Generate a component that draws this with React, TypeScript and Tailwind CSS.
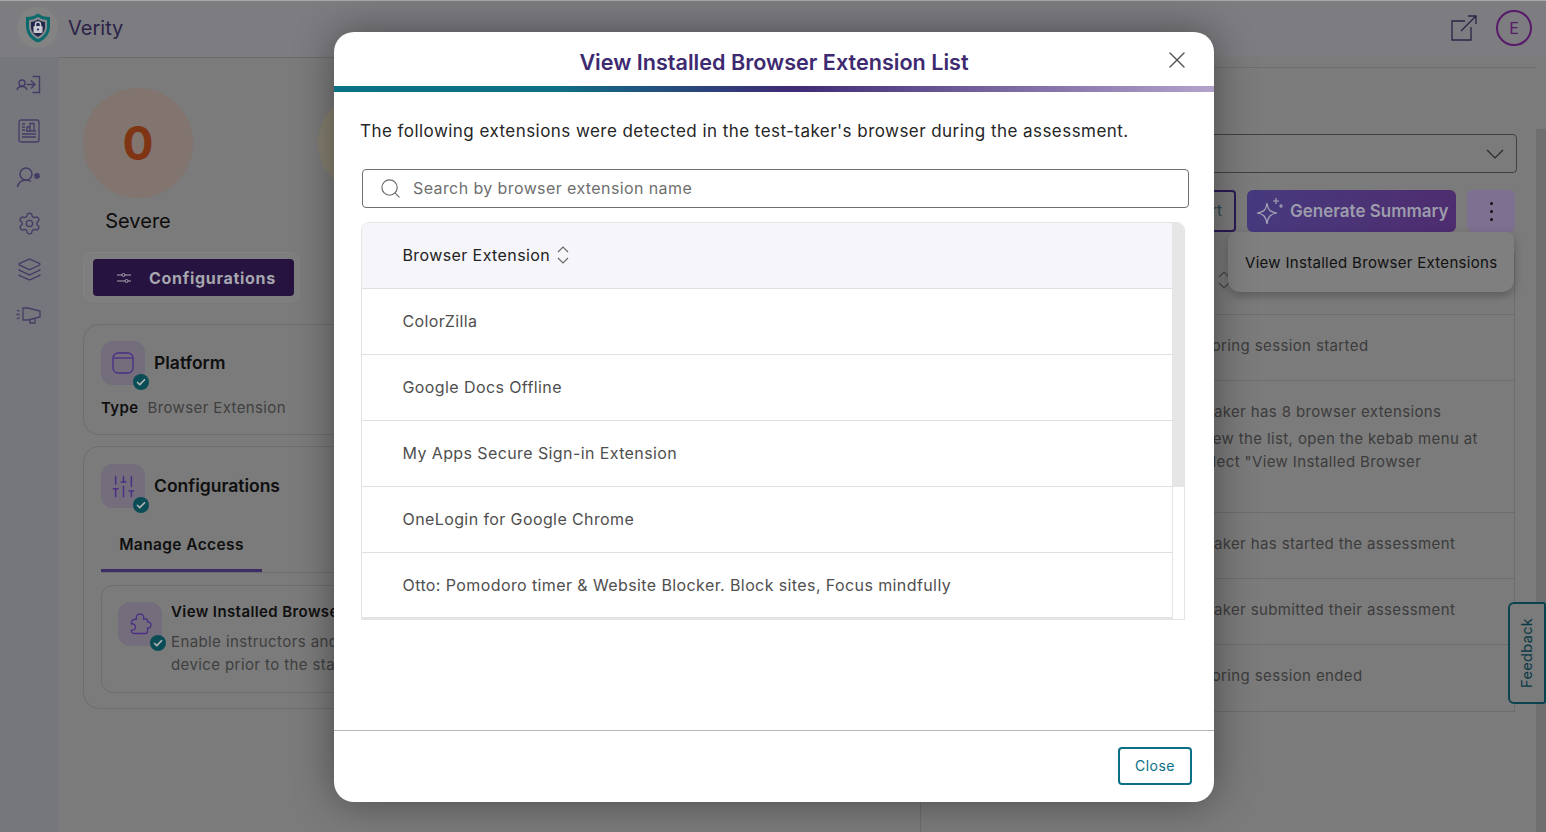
import { Layers, Search, Settings, SlidersVertical, X } from "lucide-react";

const inter = "font-['Inter','Noto_Sans',sans-serif]";

const extensions = [
  "ColorZilla",
  "Google Docs Offline",
  "My Apps Secure Sign-in Extension",
  "OneLogin for Google Chrome",
  "Otto: Pomodoro timer & Website Blocker. Block sites, Focus mindfully",
];

function Logo() {
  return (
    <svg width="28" height="32" viewBox="0 0 28 32" fill="none">
      <path d="M14 1.5 C17 4 21 5 26 5 V14 C26 22 21 28 14 30.5 C7 28 2 22 2 14 V5 C7 5 11 4 14 1.5Z" fill="#0b6a6c" />
      <path d="M14 5 C17 7 20 8 23 8 V14.5 C23 20.5 19 25 14 27 C9 25 5 20.5 5 14.5 V8 C8 8 11 7 14 5Z" fill="#8a8a8f" />
      <path d="M14 7.5 C16.5 9 18.5 9.7 21 10 V14.5 C21 19.5 18 23 14 24.7 C10 23 7 19.5 7 14.5 V10 C9.5 9.7 11.5 9 14 7.5Z" fill="#23284a" />
      <rect x="9.5" y="14" width="9" height="7" rx="1.2" fill="#c9c9d2" />
      <path d="M11.5 14 V12.5 a2.5 2.5 0 0 1 5 0 V14" stroke="#c9c9d2" strokeWidth="1.4" />
      <circle cx="14" cy="17.5" r="1.1" fill="#23284a" />
    </svg>
  );
}

function SortIcon({ color }: { color: string }) {
  return (
    <svg width="14" height="20" viewBox="0 0 14 20" fill="none" stroke={color} strokeWidth="1.2">
      <path d="M2 7 L7 2 L12 7" />
      <path d="M2 13 L7 18 L12 13" />
    </svg>
  );
}

function SideIcon({ name }: { name: string }) {
  const stroke = "#453c66";
  if (name === "login") {
    return (
      <svg width="26" height="22" viewBox="0 0 26 22" fill="none" stroke={stroke} strokeWidth="1.4">
        <circle cx="6" cy="9" r="3" />
        <path d="M1 16 C1.5 13.5 3.5 12.5 6 12.5 C8.5 12.5 10.5 13.5 11 16" />
        <path d="M10.5 10.5 H19 M15 6.5 L19 10.5 L15 14.5" />
        <path d="M16.5 2.5 H23.5 V18.5 H16.5" />
      </svg>
    );
  }
  if (name === "report") {
    return (
      <svg width="22" height="24" viewBox="0 0 22 24" fill="none" stroke={stroke} strokeWidth="1.3">
        <rect x="1" y="1" width="20" height="22" rx="2" />
        <path d="M4 5 H7 M4 8 H7 M4 11 H7 M4 15 H18 M4 18 H18" />
        <path d="M9 12 V8 H12 V12 M12 12 V4.5 H16 V12 M8 12 H18" />
      </svg>
    );
  }
  if (name === "usergear") {
    return (
      <svg width="26" height="22" viewBox="0 0 26 22" fill="none" stroke={stroke} strokeWidth="1.5">
        <circle cx="10" cy="8" r="6" />
        <path d="M1.5 21 C2.5 16.5 5.5 14 10 14 C12 14 13.5 14.5 15 15.5" />
        <circle cx="21" cy="10" r="2.4" fill={stroke} strokeWidth="1.6" strokeDasharray="1.5 0.8" />
      </svg>
    );
  }
  if (name === "settings") return <Settings size={25} color={stroke} strokeWidth={1.3} />;
  if (name === "layers") return <Layers size={25} color={stroke} strokeWidth={1.3} />;
  return (
    <svg width="26" height="20" viewBox="0 0 26 20" fill="none" stroke={stroke} strokeWidth="1.3">
      <path d="M7 3 H12 L24 6 V12 L12 15 H7Z" />
      <path d="M14 15 V18 H19 V13.5" />
      <path d="M1 5 L3.5 6.5 M0.5 9.5 H3.5 M1 14 L3.5 12.5" />
    </svg>
  );
}

function CheckBadge() {
  return (
    <span className="absolute right-[-4px] bottom-[-5px] flex h-4 w-4 items-center justify-center rounded-full bg-[#0a4d56]">
      <svg width="10" height="8" viewBox="0 0 10 8" fill="none" stroke="#b5b5b5" strokeWidth="1.6">
        <path d="M1 4 L3.8 6.6 L9 1.2" />
      </svg>
    </span>
  );
}

function IconTile({ children }: { children: React.ReactNode }) {
  return (
    <div className="relative flex h-11 w-11 shrink-0 items-center justify-center rounded-xl bg-[#736d7c]">
      {children}
      <CheckBadge />
    </div>
  );
}

function LeftPanel() {
  return (
    <div className="w-[862px] border-t border-[#6c6c6c] px-[25px] pt-[30px]">
      <div className="flex gap-[125px]">
        <div className="flex w-[110px] flex-col items-center">
          <div className="flex h-[110px] w-[110px] items-center justify-center rounded-full bg-[#82746f] text-[46px] font-bold text-[#7f3413]">
            0
          </div>
          <div className="mt-[11px] text-[20px] leading-[24px] text-[#0d0d0d]">Severe</div>
        </div>
        <div className="mt-[6px] h-[98px] w-[98px] rounded-full bg-[#85806f]" />
      </div>

      <div className="mt-[19px] h-[50px] w-[216px] rounded-lg border border-[#838383] bg-[#7e7e7e] pt-[6px] pl-[9px]">
        <div className="flex h-[37px] w-[201px] items-center rounded-[4px] bg-[#27133f] pl-[24px] text-[#a6a6ae]">
          <svg width="14" height="12" viewBox="0 0 14 12" fill="none" stroke="#a6a6ae" strokeWidth="1">
            <path d="M0 3 H5 M8 3 H14 M0 9 H8 M11 9 H14" />
            <circle cx="6.5" cy="3" r="1.5" />
            <circle cx="9.5" cy="9" r="1.5" />
          </svg>
          <span className="ml-[18px] text-[16px] font-bold tracking-[0.7px]">Configurations</span>
        </div>
      </div>

      <div className="mt-[22px] h-[111px] rounded-2xl border border-[#6d6d6d] px-[17px] pt-[16px]">
        <div className="flex items-center gap-[9px]">
          <IconTile>
            <svg width="22" height="22" viewBox="0 0 22 22" fill="none" stroke="#4b2f85" strokeWidth="1.3">
              <rect x="1" y="1" width="20" height="20" rx="5" />
              <path d="M1 6 H21" />
            </svg>
          </IconTile>
          <span className="text-[17.5px] font-semibold text-[#0f0f0f]">Platform</span>
        </div>
        <div className="mt-[14px] flex gap-[9px] text-[15px] leading-[18px] tracking-wide">
          <span className="font-semibold text-[#0f0f0f]">Type</span>
          <span className="text-[#3f3f3f]">Browser Extension</span>
        </div>
      </div>

      <div className="mt-[11px] h-[263px] rounded-2xl border border-[#6d6d6d] px-[17px] pt-[17px]">
        <div className="flex items-center gap-[9px]">
          <IconTile>
            <SlidersVertical size={27} color="#4b2f85" strokeWidth={1.3} />
          </IconTile>
          <span className="text-[17.5px] font-semibold text-[#0f0f0f]">Configurations</span>
        </div>
        <div className="mt-[28px] border-b border-[#6d6d6d]">
          <div className="w-[161px] border-b-[3px] border-[#3d2c66] pb-[15px] text-center text-[15.5px] leading-[18px] font-semibold tracking-wide text-[#0f0f0f]">
            Manage Access
          </div>
        </div>
        <div className="mt-[12px] flex h-[108px] gap-[9px] rounded-xl border border-[#6d6d6d] pt-[16px] pl-4">
          <IconTile>
            <svg width="24" height="24" viewBox="0 0 24 24" fill="none" stroke="#4b2f85" strokeWidth="1.3">
              <path d="M8.5 7 C7.5 4 9.5 2 12 2 C14.5 2 16.5 4 15.5 7 H18 C19 7 19.5 7.5 19.5 8.5 V10 C21.5 9.5 23 11 23 13 C23 15 21.5 16.5 19.5 16 V20 C19.5 21 19 21.5 18 21.5 H6 C4 21.5 3 20 3.5 18 C6 18.5 7.5 17 7.5 15 C7.5 13 6 11.5 3.5 12 C3 10 4 8 6 7.5 Z" />
            </svg>
          </IconTile>
          <div className="whitespace-nowrap tracking-wide">
            <div className="text-[15px] leading-[20px] font-semibold text-[#0f0f0f]">View Installed Browser Extensions</div>
            <div className="mt-[8px] text-[15px] leading-[23px] text-[#3f3f3f]">
              Enable instructors and admins to view the extensions on the
              <br />
              device prior to the start of the assessment
            </div>
          </div>
        </div>
      </div>
    </div>
  );
}

function RightPanel() {
  const rows = [
    { h: "h-[66px]", lines: ["Monitoring session started"] },
    {
      h: "h-[132px]",
      lines: ["Test-taker has 8 browser extensions", "To view the list, open the kebab menu at", 'and select "View Installed Browser'],
    },
    { h: "h-[66px]", lines: ["Test-taker has started the assessment"] },
    { h: "h-[66px]", lines: ["Test-taker submitted their assessment"] },
    { h: "h-[67px]", lines: ["Monitoring session ended"] },
  ];

  return (
    <div className="mt-[10px] flex h-[765px] w-[616px] flex-col border-t border-l border-[#6c6c6c] pt-[66px]">
      <div className="ml-[40px] flex h-[39px] w-[556px] items-center justify-end rounded-[4px] border border-[#404040] pr-[12px]">
        <svg width="18" height="10" viewBox="0 0 18 10" fill="none" stroke="#2a2a2a" strokeWidth="1.2">
          <path d="M1 1 L9 9 L17 1" />
        </svg>
      </div>
      <div className="relative mt-[17px] ml-[40px] flex w-[554px] justify-end gap-[11px]">
        <div className="flex h-[42px] w-[90px] items-center justify-end rounded-[4px] border-2 border-[#2a1a55] pr-[12px] text-[15px] text-[#28464e]">
          Report
        </div>
        <div className="flex h-[42px] w-[209px] items-center gap-[6px] rounded-md bg-gradient-to-r from-[#473a7f] to-[#4e2d6f] pl-[9px] font-semibold text-[#9c9cac]">
          <svg width="28" height="28" viewBox="0 0 28 28" fill="none" stroke="#a5a5b5" strokeWidth="1.2">
            <path d="M11 6 C12 13 14 15 21 16 C14 17 12 20 11 27 C10 20 8 17 1 16 C8 15 10 13 11 6Z" />
            <path d="M20 1 V7 M17 4 H23 M25 7 V11 M23 9 H27" />
          </svg>
          <span className="pt-[1px] text-[17px]">Generate Summary</span>
        </div>
        <div className="flex h-[42px] w-[48px] flex-col items-center justify-center gap-[5px] rounded-md bg-[#7d7090]">
          <span className="h-[3px] w-[3px] rounded-full bg-[#111111] p-[1.5px]" />
          <span className="h-[3px] w-[3px] rounded-full bg-[#111111] p-[1.5px]" />
          <span className="h-[3px] w-[3px] rounded-full bg-[#111111] p-[1.5px]" />
        </div>
        <div className="absolute top-[42px] right-[1px] z-10 flex h-[60px] w-[286px] items-center rounded-t-lg rounded-b-xl bg-[#7f7f7f] pt-[2px] pl-[17px] text-[15px] tracking-[0.3px] whitespace-nowrap text-[#111111] shadow-[0_4px_10px_rgba(0,0,0,0.25)]">
          View Installed Browser Extensions
        </div>
      </div>
      <div className="mt-[21px] ml-[40px] w-[554px] border-r border-[#6d6d6d]">
        <div className="flex h-[62px] items-start justify-end border-b border-[#6d6d6d] pt-[17px] pr-[283px]">
          <SortIcon color="#4a4a4a" />
        </div>
        {rows.map((row) => (
          <div
            key={row.lines[0]}
            className={`${row.h} flex flex-col justify-center border-b border-[#6d6d6d] pl-[209px] text-[15px] tracking-wide whitespace-nowrap text-[#3c3c3c]`}
          >
            {row.lines.length === 1 ? (
              <span className="pb-[3px]">{row.lines[0]}</span>
            ) : (
              <div className="h-full pt-[19px] leading-[23px]">
                <div className="mb-[4px]">{row.lines[0]}</div>
                <div className="pl-[7px]">{row.lines[1]}</div>
                <div className="-ml-[7px]">{row.lines[2]}</div>
              </div>
            )}
          </div>
        ))}
      </div>
    </div>
  );
}

function ExtensionModal() {
  return (
    <div className="absolute top-[32px] left-[334px] z-20 flex h-[770px] w-[880px] flex-col overflow-hidden rounded-[20px] bg-white shadow-[0_0_40px_rgba(0,0,0,0.4)]">
      <div className="relative flex h-[54px] shrink-0 items-center justify-center pt-[6px]">
        <h2 className="text-[21.6px] font-semibold text-[#3d2a70]">View Installed Browser Extension List</h2>
        <X size={28} color="#555555" strokeWidth={1.2} className="absolute top-[14px] right-[23px]" />
      </div>
      <div className="h-[6px] shrink-0 bg-[linear-gradient(90deg,#0b7285_0%,#0e6f85_25%,#3e2a75_52%,#b3a3cb_100%)]" />

      <div className="flex-1 px-[26px] pt-[27px]">
        <p className="text-[17px] leading-[24px] tracking-[0.45px] text-[#262626]">
          The following extensions were detected in the test-taker's browser during the assessment.
        </p>
        <div className="mt-[26px] ml-[2px] flex h-[39px] w-[827px] items-center rounded-[4px] border border-[#6f6f6f] pb-[1px] pl-[16px]">
          <Search size={23} color="#6a6a6a" strokeWidth={1.2} />
          <span className="ml-[11px] text-[16px] tracking-wide text-[#6f6f6f]">Search by browser extension name</span>
        </div>
        <div className="mt-[14px] ml-[1px] flex h-[398px] w-[824px] overflow-hidden rounded-t-lg border border-[#e4e4e4] tracking-wide">
          <div className="w-[811px] border-r border-b-2 border-[#e4e4e4]">
            <div className="flex h-[66px] items-center gap-[6px] border-b border-[#e0e0e0] bg-[#f5f5fa] pb-[2px] pl-[40.5px] text-[16px] text-[#222222]">
              Browser Extension
              <SortIcon color="#6a6a6a" />
            </div>
            {extensions.map((name, i) => (
              <div
                key={name}
                className={`flex h-[66px] items-center pb-[2px] pl-[40.5px] text-[16px] text-[#4f4f4f] ${i < extensions.length - 1 ? "border-b border-[#e0e0e0]" : ""}`}
              >
                {name}
              </div>
            ))}
          </div>
          <div className="flex-1">
            <div className="h-[264px] bg-[#e6e6e6]" />
          </div>
        </div>
      </div>

      <div className="flex h-[72px] shrink-0 items-center justify-end border-t border-[#b5b5b5] pr-[22px] pb-[2px]">
        <div className="flex h-[38px] w-[74px] items-center justify-center rounded-[4px] border-2 border-[#0b6f85] text-[14px] tracking-[0.5px] text-[#0b6f85]">
          Close
        </div>
      </div>
    </div>
  );
}

export default function App() {
  return (
    <div className={`${inter} relative h-[832px] w-[1546px] overflow-hidden bg-[#7b7b7b]`}>
      <div className="flex h-[57px] items-center justify-between border-t border-[#a8a8a8] bg-[#7d7c80] pr-[14px] pb-[3px] pl-[17px]">
        <div className="flex items-center gap-[10px]">
          <div className="flex h-[41px] w-[41px] items-center justify-center rounded-full bg-[#838383]">
            <Logo />
          </div>
          <span className="text-[20px] text-[#2b2347]">Verity</span>
        </div>
        <div className="flex items-center gap-[19px]">
          <svg width="26" height="26" viewBox="0 0 26 26" fill="none" stroke="#2b2347" strokeWidth="1.3">
            <path d="M14 6 H1 V25 H20 V12" />
            <path d="M10 16 L25 1 M17 1 H25 V9" />
          </svg>
          <div className="flex h-9 w-9 items-center justify-center rounded-full border-2 border-[#571a6a] text-[16px] text-[#571a6a]">
            E
          </div>
        </div>
      </div>

      <div className="flex h-[775px]">
        <div className="flex w-[58px] flex-col items-center bg-[#75777d] pt-[5px]">
          {["login", "report", "usergear", "settings", "layers", "promo"].map((name) => (
            <div key={name} className="flex h-[46px] w-full items-center justify-center">
              <SideIcon name={name} />
            </div>
          ))}
        </div>
        <LeftPanel />
        <div className="flex flex-1">
          <RightPanel />
          <div className="mt-[72px] flex-1 bg-[#6f6f6f]" />
        </div>
      </div>

      <div className="absolute top-[602px] right-0 z-10 flex h-[102px] w-[38px] items-center justify-center rounded-l-md rounded-r-[3px] border-2 border-[#0a4250] bg-[#7b7b7b]">
        <span className="-rotate-90 text-[14.5px] tracking-wide whitespace-nowrap text-[#0a3a46]">Feedback</span>
      </div>

      <ExtensionModal />
    </div>
  );
}
